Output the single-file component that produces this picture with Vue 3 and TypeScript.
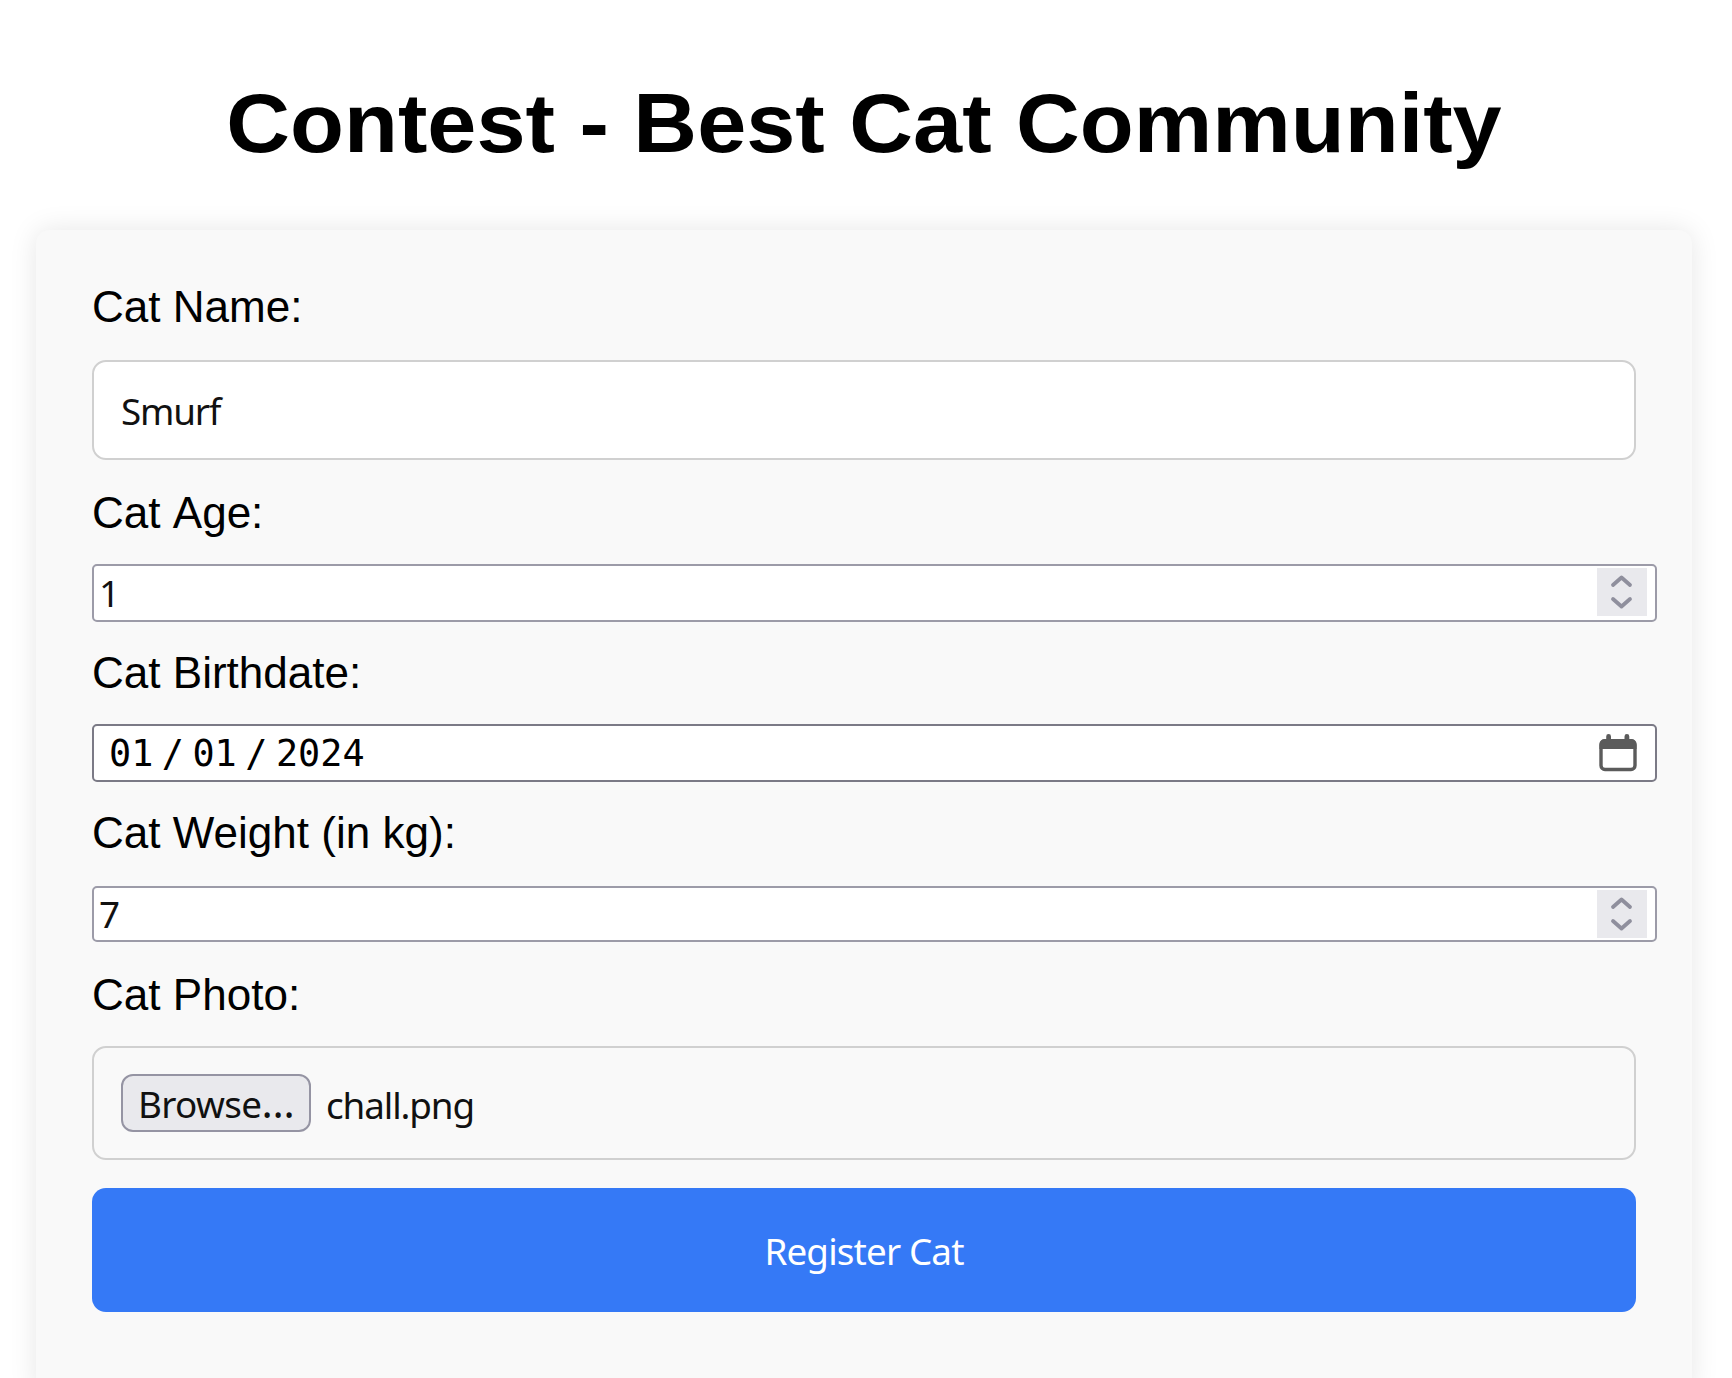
<script setup lang="ts">
import { ref } from 'vue'

const catName = ref<string>('Smurf')
const age = ref<string>('1')
const month = ref<string>('01')
const day = ref<string>('01')
const year = ref<string>('2024')
const weight = ref<string>('7')
const fileName = ref<string>('chall.png')
</script>

<template>
  <main class="page">
    <h1 class="title">Contest - Best Cat Community</h1>
    <form class="card" @submit.prevent>
      <label class="label" for="name">Cat Name:</label>
      <input id="name" v-model="catName" class="text-input" type="text" />

      <label class="label age" for="age">Cat Age:</label>
      <div class="native">
        <input id="age" v-model="age" class="bare" type="text" />
        <span class="spinner">
          <svg viewBox="0 0 50 48" width="50" height="48">
            <path d="M16 17 24.500 9.500 33 17M16 31 24.500 38.500 33 31" />
          </svg>
        </span>
      </div>

      <label class="label mid">Cat Birthdate:</label>
      <div class="native date">
        <span class="part">{{ month }}</span>
        <span class="slash">/</span>
        <span class="part">{{ day }}</span>
        <span class="slash">/</span>
        <span class="part">{{ year }}</span>
        <svg class="calendar" viewBox="0 0 38 38" width="38" height="38">
          <rect x="2" y="7" width="34" height="28.500" rx="4" fill="#fff" stroke="#5b5b5b" stroke-width="3.400" />
          <path d="M.5 15V10a5 5 0 0 1 5-5h1.700V2.500a2.400 2.400 0 0 1 4.800 0V5h13.500V2.500a2.400 2.400 0 0 1 4.800 0V5h2.200a5 5 0 0 1 5 5v5z" fill="#5b5b5b" />
        </svg>
      </div>

      <label class="label mid weight-label" for="weight">Cat Weight (in kg):</label>
      <div class="native short">
        <input id="weight" v-model="weight" class="bare" type="text" />
        <span class="spinner">
          <svg viewBox="0 0 50 48" width="50" height="48">
            <path d="M16 17 24.500 9.500 33 17M16 31 24.500 38.500 33 31" />
          </svg>
        </span>
      </div>

      <label class="label photo">Cat Photo:</label>
      <div class="file-box">
        <button type="button" class="browse">Browse<span class="dots">…</span></button>
        <span class="file-name">{{ fileName }}</span>
      </div>

      <button class="submit" type="submit">Register Cat</button>
    </form>
  </main>
</template>

<style>
html,
body {
  margin: 0;
  background: #fff;
  overflow: hidden;
}
</style>

<style scoped>
.page {
  height: 1378px;
  box-sizing: border-box;
  padding: 72px 40px 0 36px;
  overflow: hidden;
  background: #fff;
  color: #000;
  font-family: "Liberation Sans", Arial, sans-serif;
}
.title {
  margin: 0 0 57.500px;
  font-size: 88.300px;
  line-height: 100px;
  font-weight: 700;
  text-align: center;
  white-space: nowrap;
  transform: scaleY(0.94);
  transform-origin: 50% 80px;
}
.card {
  display: flex;
  flex-direction: column;
  box-sizing: border-box;
  height: 1166.500px;
  padding: 52.500px 56px 0;
  border-radius: 14px;
  background: #f9f9f9;
  box-shadow: 0 0 28px rgba(0, 0, 0, 0.1);
}
.label {
  flex: none;
  margin-bottom: 28px;
  font-size: 44.050px;
  line-height: 50px;
}
.label.age {
  margin: 28px 0 26px;
  word-spacing: 2.400px;
}
.label.mid {
  margin: 26px 0;
}
.label.weight-label {
  margin-bottom: 28px;
}
.label.photo {
  margin: 28px 0 26px;
}
.text-input {
  box-sizing: border-box;
  width: 1544px;
  height: 100px;
  margin: 0;
  padding: 1px 27px 0;
  border: 2px solid #d0d0d0;
  border-radius: 14px;
  outline: 0;
  background: #fff;
  color: #111;
  font: 36.800px "Noto Sans", sans-serif;
  letter-spacing: -1.200px;
}
.native {
  display: flex;
  flex: none;
  align-items: center;
  box-sizing: border-box;
  width: 1564.500px;
  height: 58px;
  padding: 0 8px 0 5px;
  border: 2px solid #9c9ba8;
  border-radius: 5px;
  background: #fff;
}
.native.short {
  height: 56px;
}
.bare {
  flex: 1;
  min-width: 0;
  height: 52px;
  padding: 0 0 1px;
  border: 0;
  outline: 0;
  background: transparent;
  color: #111;
  font: 36.800px "Noto Sans", sans-serif;
}
.spinner {
  align-self: flex-start;
  width: 50px;
  height: 48px;
  margin-top: 2px;
  background: #e9e9ed;
}
.spinner svg {
  display: block;
}
.spinner path {
  fill: none;
  stroke: #8f8f9d;
  stroke-width: 3.800;
  stroke-linecap: round;
  stroke-linejoin: round;
}
.date {
  padding: 0 18px 0 15px;
  border-color: #7b7a86;
  color: #000;
  font: 36.800px "DejaVu Sans Mono", monospace;
}
.slash {
  margin: 0 8.500px;
}
.calendar {
  margin: 0 0 1px auto;
}
.file-box {
  display: flex;
  flex: none;
  align-items: center;
  box-sizing: border-box;
  width: 1544px;
  height: 114px;
  padding: 0 27px;
  border: 2px solid #d0d0d0;
  border-radius: 14px;
  color: #111;
  font: 36.800px "Noto Sans", sans-serif;
}
.browse {
  box-sizing: border-box;
  width: 190px;
  height: 58px;
  margin: 0 15px 0 0;
  padding: 2px 0 0;
  border: 2px solid #9594a3;
  border-radius: 12px;
  background: #e9e9ed;
  color: #111;
  font: inherit;
  line-height: 50px;
  letter-spacing: -0.600px;
}
.dots {
  font-size: 42px;
  line-height: 1px;
}
.file-name {
  padding-top: 3px;
  letter-spacing: -1.100px;
}
.submit {
  flex: none;
  width: 1544px;
  height: 124px;
  margin: 28px 0 0;
  padding: 1px 0 0;
  border: 0;
  border-radius: 14px;
  background: #3579f6;
  color: #fff;
  font: 36.800px "Noto Sans", sans-serif;
  letter-spacing: -0.850px;
}
</style>
